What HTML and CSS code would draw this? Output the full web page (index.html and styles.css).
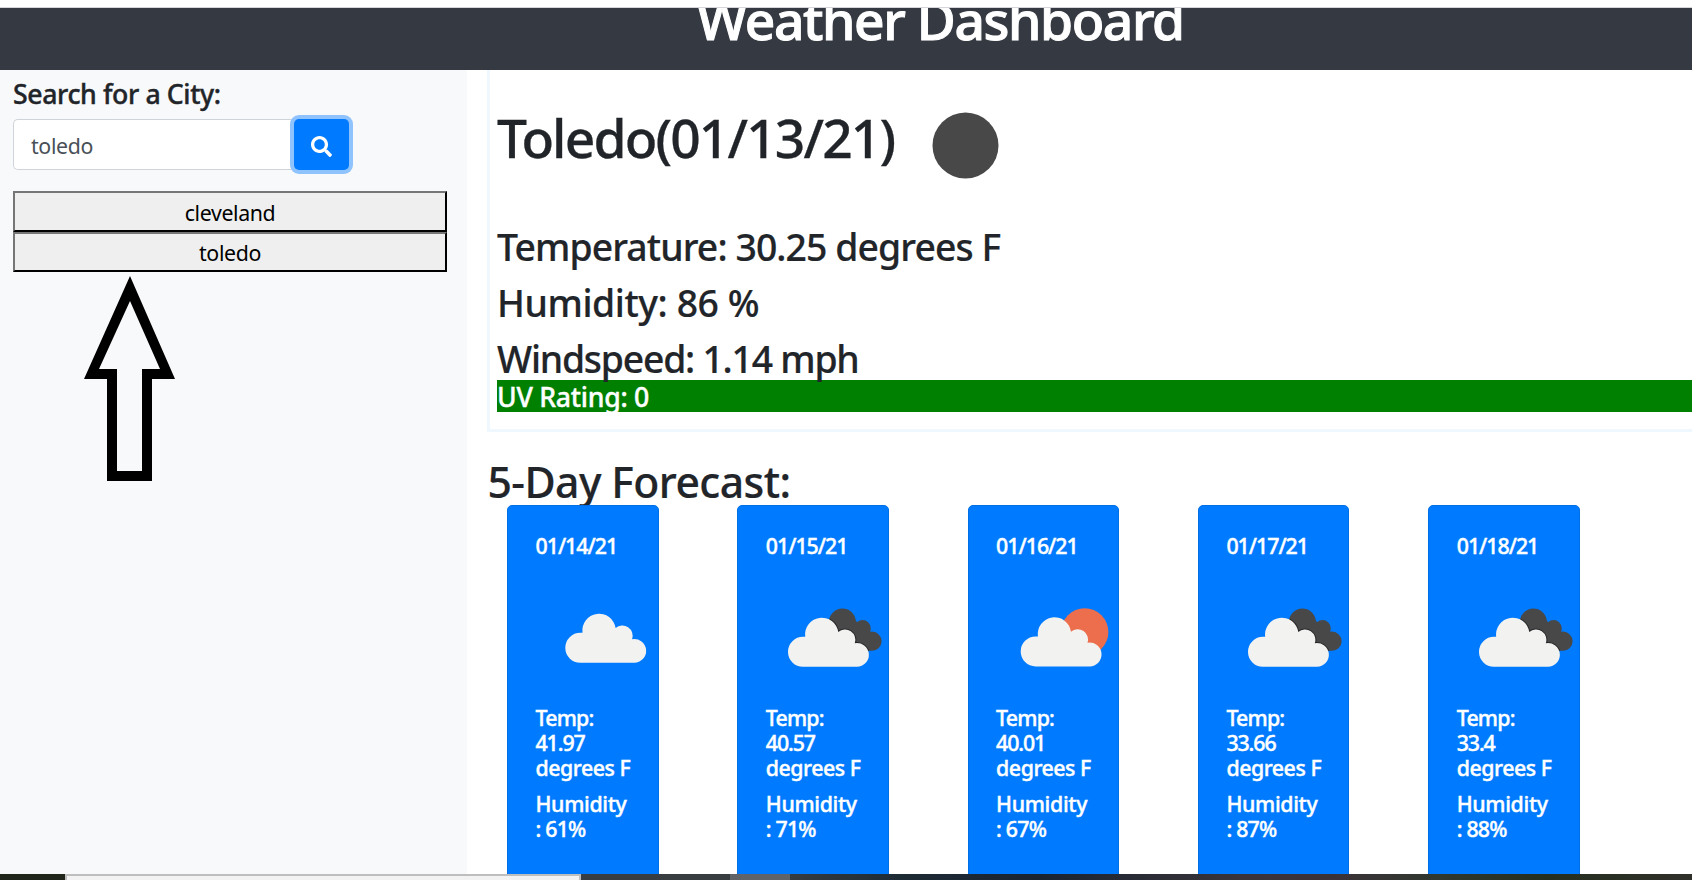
FILE: index.html
```
<!DOCTYPE html>
<html lang="en">
<head>
<meta charset="utf-8">
<title>Weather Dashboard</title>
<link rel="stylesheet" href="styles.css">
</head>
<body>
<svg class="defs" width="0" height="0" aria-hidden="true">
  <defs>
    <path id="cloud" d="M15 50.3A15 15 0 0 1 15 20.3H17.2A16.7 16.7 0 1 1 50.3 15.6A10.3 10.3 0 0 1 66.8 26.7A11.9 11.9 0 1 1 68.6 50.3Z"/>
    <clipPath id="dark-shape"><circle cx="76.4" cy="50.9" r="13.4"/><circle cx="96.5" cy="57.4" r="8.300"/><circle cx="106" cy="70.2" r="9.600"/><path d="M75 50L88 46L97 62L106 79.800H85Z"/></clipPath>
    <symbol id="broken-clouds" viewBox="0 0 133 133">
      <g clip-path="url(#dark-shape)"><rect width="133" height="133" fill="#484849"/><use href="#cloud" x="22" y="45.500" fill="none" stroke="#28282a" stroke-width="2"/></g>
      <use href="#cloud" x="22" y="45.500" fill="#f2f2f0"/>
    </symbol>
  </defs>
</svg>
<div class="chrome-top"></div>
<header class="banner"><h1>Weather Dashboard</h1></header>
<main class="layout">
  <aside class="sidebar">
    <h5>Search for a City:</h5>
    <form class="search">
      <input class="field" type="text" value="toledo">
      <button class="go" type="button" aria-label="Search">
        <svg width="21" height="21" viewBox="0 0 512 512"><path fill="#fff" d="M505 442.7L405.300 343c-4.500-4.500-10.600-7-17-7H372c27.600-35.300 44-79.700 44-128C416 93.100 322.900 0 208 0S0 93.100 0 208s93.100 208 208 208c48.300 0 92.700-16.400 128-44v16.300c0 6.400 2.500 12.500 7 17l99.700 99.700c9.400 9.400 24.600 9.400 33.900 0l28.300-28.300c9.400-9.400 9.400-24.600.1-34zM208 336c-70.700 0-128-57.200-128-128 0-70.700 57.200-128 128-128 70.700 0 128 57.200 128 128 0 70.700-57.200 128-128 128z"/></svg>
      </button>
    </form>
    <div class="history">
      <button type="button">cleveland</button>
      <button type="button">toledo</button>
    </div>
    <svg class="arrow" width="92" height="206" viewBox="0 0 92 206"><path fill="#000" fill-rule="evenodd" d="M46 0L91 103H68V205H23V103H0ZM46 25L15 93H33V195H58V93H76Z"/></svg>
  </aside>
  <section class="content">
    <div class="current">
      <div class="place">
        <h1>Toledo(01/13/21)</h1>
        <svg width="133" height="133" viewBox="0 0 133 133"><circle cx="66.500" cy="66.500" r="33" fill="#484849"/></svg>
      </div>
      <h3 class="temperature">Temperature: 30.25 degrees F</h3>
      <h3 class="humidity">Humidity: 86 %</h3>
      <h3 class="wind">Windspeed: 1.14 mph</h3>
      <h5 class="uv">UV Rating: 0</h5>
    </div>
    <h2>5-Day Forecast:</h2>
    <div class="days">
      <article class="card">
        <h6 class="date">01/14/21</h6>
        <svg class="sky" width="133" height="133" viewBox="0 0 133 133"><use href="#cloud" x="29.300" y="41.500" fill="#f2f2f0"/></svg>
        <h6><span class="t">Temp:</span><span class="v">41.97</span><span class="d">degrees F</span></h6>
        <h6><span class="h">Humidity</span><span class="p">: 61%</span></h6>
      </article>
      <article class="card">
        <h6 class="date">01/15/21</h6>
        <svg class="sky" width="133" height="133"><use href="#broken-clouds"/></svg>
        <h6><span class="t">Temp:</span><span class="v">40.57</span><span class="d">degrees F</span></h6>
        <h6><span class="h">Humidity</span><span class="p">: 71%</span></h6>
      </article>
      <article class="card">
        <h6 class="date">01/16/21</h6>
        <svg class="sky" width="133" height="133" viewBox="0 0 133 133"><circle cx="88.700" cy="61" r="23.700" fill="#ec6e4c"/><use href="#cloud" x="24.700" y="45.100" fill="#f2f2f0"/></svg>
        <h6><span class="t">Temp:</span><span class="v">40.01</span><span class="d">degrees F</span></h6>
        <h6><span class="h">Humidity</span><span class="p">: 67%</span></h6>
      </article>
      <article class="card">
        <h6 class="date">01/17/21</h6>
        <svg class="sky" width="133" height="133"><use href="#broken-clouds"/></svg>
        <h6><span class="t">Temp:</span><span class="v">33.66</span><span class="d">degrees F</span></h6>
        <h6><span class="h">Humidity</span><span class="p">: 87%</span></h6>
      </article>
      <article class="card">
        <h6 class="date">01/18/21</h6>
        <svg class="sky" width="133" height="133"><use href="#broken-clouds"/></svg>
        <h6><span class="t">Temp:</span><span class="v">33.4</span><span class="d">degrees F</span></h6>
        <h6><span class="h">Humidity</span><span class="p">: 88%</span></h6>
      </article>
    </div>
  </section>
</main>
<footer class="taskbar"><div class="start"></div><div class="find"></div><div class="apps"></div><div class="active"></div><div class="rest"></div></footer>
</body>
</html>
```
FILE: styles.css
```
* { box-sizing: border-box; }
body {
  margin: 0;
  height: 880px;
  overflow: hidden;
  display: flex;
  flex-direction: column;
  background: #fff;
  color: #212529;
  font: 400 21.33px/32px "Noto Sans", "Open Sans", sans-serif;
}
h1, h2, h3, h5, h6 { margin: 0; font-weight: 500; line-height: 1.2; white-space: nowrap; }
h1 { font-size: 53.33px; -webkit-text-stroke: .3px; }
h2 { font-size: 42.67px; letter-spacing: -.57px; -webkit-text-stroke: .2px; }
h3 { font-size: 37.33px; -webkit-text-stroke: .2px; }
h5 { font-size: 26.67px; -webkit-text-stroke: .4px; }
h6 { font-size: 21.33px; -webkit-text-stroke: .4px; }
.defs { position: absolute; }

.chrome-top { flex: 0 0 8px; background: #fff; border-bottom: 1px solid #d5d6d9; }
.banner {
  flex: 0 0 62px;
  overflow: hidden;
  background: #353a42;
  color: #fff;
  padding-left: 697px;
}
.banner h1 { margin-top: -20.500px; letter-spacing: -1.41px; -webkit-text-stroke: 1px; }

.layout { flex: 0 0 804px; display: flex; overflow: hidden; }
.sidebar {
  flex: 0 0 467px;
  background: #f8f9fb;
  padding: 7.500px 20px 0 13px;
}
.sidebar h5 { height: 32px; letter-spacing: -.39px; }
.search { display: flex; margin-top: 9.500px; }
.field {
  width: 281px;
  height: 51px;
  border: 1px solid #ced4da;
  border-right: 0;
  border-radius: 5px 0 0 5px;
  background: #fff;
  padding: 1px 17px 0;
  color: #495057;
  font: inherit;
  letter-spacing: -.36px;
}
.go {
  width: 55px;
  height: 51px;
  border: 0;
  border-radius: 5px;
  background: #007bff;
  box-shadow: 0 0 0 4px #8fc3fd;
  display: flex;
  align-items: center;
  justify-content: center;
  padding: 3px 0 0;
}
.history { display: flex; flex-direction: column; margin-top: 21px; }
.history button {
  height: 41px;
  border: 2px outset #000;
  border-color: #767676 #212121 #212121 #767676;
  background: #efefef;
  color: #000;
  padding: 2px 0 0;
  font: inherit;
  letter-spacing: -.38px;
}
.history button + button { height: 40px; }
.arrow { display: block; margin: 4px 0 0 71px; }

.content { flex: 1; padding-left: 20px; }
.current {
  height: 362px;
  border: solid #f0f8ff;
  border-width: 0 0 3px 3px;
  padding: 9px 0 0 7px;
}
.place { display: flex; height: 145.500px; }
.place h1 { width: 402px; padding-top: 27px; letter-spacing: -1.850px; }
.current h3 { height: 56px; }
.temperature { letter-spacing: -.9px; }
.humidity { letter-spacing: -.42px; }
.wind { letter-spacing: -1.22px; }
.current h3.wind { position: relative; height: 43.500px; }
.uv { height: 32px; background: #008000; color: #fff; letter-spacing: -.26px; line-height: 34px; }
.content h2 { margin-top: 23.500px; height: 49.500px; padding-left: .5px; }

.days { display: grid; grid-template-columns: repeat(5, 151.500px); column-gap: 78.800px; padding-left: 20px; }
.card {
  height: 420px;
  border: 1px solid #006fe6;
  border-radius: 5px;
  background: #007bff;
  color: #fff;
  padding: 27px 0 0 27.500px;
}
.card h6 { margin-bottom: 10.500px; }
.card .date { margin-bottom: 12px; letter-spacing: -1px; }
.sky { display: block; }
.card span { display: block; height: 25.200px; line-height: 27.600px; }
.t { letter-spacing: -.8px; }
.v { letter-spacing: -1.1px; }
.d { letter-spacing: -.46px; }
.h { letter-spacing: -.34px; }
.p { letter-spacing: -.8px; }

.taskbar { flex: 0 0 6px; display: flex; background: #23282b; }
.start { width: 65px; background: #20271a; }
.find { width: 516px; background: #f2f2f2; border: 2px solid #bebebe; border-bottom: 0; }
.apps { width: 149px; background: #373d41; }
.active { width: 60px; background: #606468; }
.rest { flex: 1; background: linear-gradient(90deg, #373c40, #1d2b35 12%, #1a2431 28%, #3a343a 50%, #3b3238 60%, #30382f 72%, #252f1f 84%, #30302a); }
```
